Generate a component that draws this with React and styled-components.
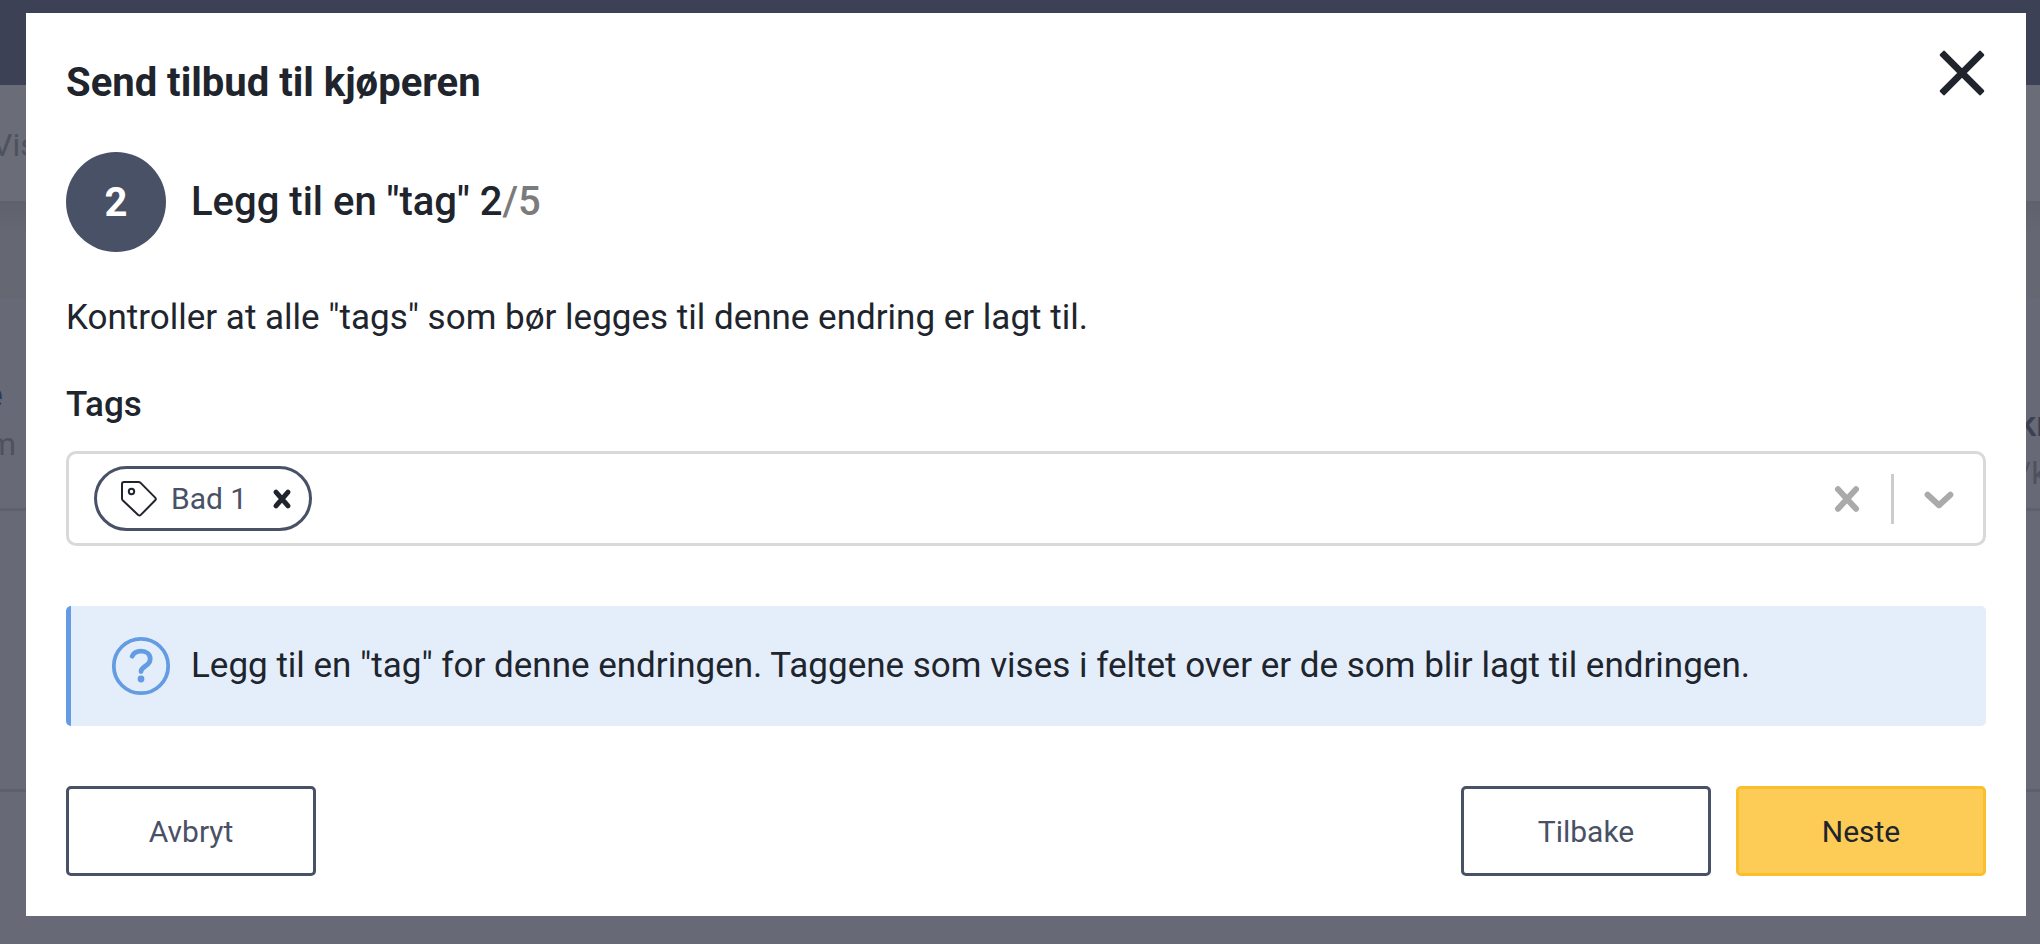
import React, { useState } from "react";
import styled, { createGlobalStyle } from "styled-components";

const GlobalStyle = createGlobalStyle`
  * {
    box-sizing: border-box;
  }

  body {
    margin: 0;
    font-family: Roboto, "Liberation Sans", sans-serif;
    color: #20242c;
    background-color: #676a76;
  }
`;

const Page = styled.div`
  display: grid;
  min-height: 100vh;
  overflow: hidden;

  > * {
    grid-area: 1 / 1;
    min-width: 0;
  }
`;

const Backdrop = styled.div`
  display: flex;
  flex-direction: column;
  overflow: hidden;
  background-color: #676a76;
`;

const TopBar = styled.div`
  height: 85px;
  background-color: #3d4155;
`;

const FilterBar = styled.div`
  display: flex;
  align-items: center;
  height: 116px;
  margin-left: -8px;
  padding-top: 4px;
  font-size: 32px;
  color: #4e525f;
  background-color: #6a6c78;
`;

const BarShadow = styled.div`
  height: 98px;
  background: linear-gradient(#5f626d, #656873 35%, #656873);
`;

const ListRow = styled.div`
  display: flex;
  justify-content: space-between;
  height: ${(props) => props.$height}px;
  margin: 0 -14px 0 -16px;
  border-bottom: 3px solid #5e616d;
`;

const RowCell = styled.div`
  display: flex;
  flex-direction: column;
  justify-content: flex-end;
  width: 36px;
  padding-bottom: ${(props) => props.$bottom}px;
  line-height: 48px;
  white-space: nowrap;

  strong {
    font-size: 35px;
    font-weight: 500;
    color: ${(props) => props.$color};
  }

  span {
    font-size: 32px;
    color: #4e525f;
  }
`;

const LeftCell = styled(RowCell)`
  span {
    padding-left: 4px;
  }
`;

const Modal = styled.div`
  align-self: start;
  margin: 13px 14px 28px 26px;
  padding: 40px;
  background-color: #ffffff;
`;

const ModalHeader = styled.header`
  display: flex;
  align-items: flex-start;
  justify-content: space-between;
  margin-bottom: 39px;
`;

const ModalTitle = styled.h1`
  margin: 0;
  font-size: 40px;
  font-weight: 700;
  line-height: 60px;
`;

const IconButton = styled.button`
  display: flex;
  align-items: center;
  justify-content: center;
  padding: 0;
  border: none;
  background: none;
  color: ${(props) => props.$color || "#20242c"};
  cursor: pointer;
`;

const CloseButton = styled(IconButton)`
  margin-top: -4px;
`;

const StepHeader = styled.div`
  display: flex;
  align-items: center;
  gap: 25px;
  margin-bottom: 40px;
`;

const StepNumber = styled.div`
  display: flex;
  align-items: center;
  justify-content: center;
  width: 100px;
  height: 100px;
  border-radius: 50%;
  font-size: 40px;
  font-weight: 700;
  color: #ffffff;
  background-color: #495166;
`;

const StepTitle = styled.h2`
  margin: 0;
  font-size: 40px;
  font-weight: 500;
  line-height: 60px;

  span {
    color: #7b7b7b;
  }
`;

const Description = styled.p`
  margin: 0 0 35px;
  font-size: 35px;
  line-height: 52px;
`;

const FieldLabel = styled.label`
  display: block;
  margin-bottom: 20px;
  font-size: 35px;
  font-weight: 500;
  line-height: 52px;
`;

const SelectBox = styled.div`
  display: flex;
  align-items: center;
  height: 95px;
  padding: 0 29px 0 25px;
  border: 3px solid #d9d9d9;
  border-radius: 10px;
`;

const Tag = styled.div`
  display: flex;
  align-items: center;
  height: 65px;
  padding: 0 16px 0 24px;
  border: 3px solid #495166;
  border-radius: 33px;
  font-size: 30px;
  color: #495166;

  span {
    margin: 0 24px 0 14px;
  }
`;

const TagInput = styled.input`
  flex: 1;
  min-width: 0;
  height: 60px;
  padding: 0 12px;
  border: none;
  outline: none;
  font: inherit;
  font-size: 30px;
  background: none;
`;

const Divider = styled.div`
  width: 3px;
  height: 50px;
  margin: 0 30px;
  background-color: #cccccc;
`;

const InfoBox = styled.div`
  display: flex;
  align-items: center;
  gap: 20px;
  min-height: 120px;
  margin: 60px 0;
  padding: 0 40px;
  border-left: 5px solid #639ce2;
  border-radius: 5px;
  font-size: 35px;
  line-height: 52px;
  background-color: #e4eefb;
`;

const ModalFooter = styled.footer`
  display: flex;
  gap: 25px;
`;

const Button = styled.button`
  width: 250px;
  height: 90px;
  padding: 0;
  border: 3px solid ${(props) => (props.$primary ? "#fbbe2c" : "#495166")};
  border-radius: 5px;
  font-family: inherit;
  font-size: 30px;
  color: ${(props) => (props.$primary ? "#20242c" : "#495166")};
  background-color: ${(props) => (props.$primary ? "#fdcc57" : "#ffffff")};
  cursor: pointer;
`;

const CancelButton = styled(Button)`
  margin-right: auto;
`;

const CrossIcon = ({ size, reach, stroke }) => {
  const end = size - reach;
  return (
    <svg width={size} height={size} viewBox={`0 0 ${size} ${size}`} fill="none">
      <path
        d={`M${reach} ${reach - 0.8}L${end} ${end + 0.8}M${end} ${reach - 0.8}L${reach} ${end + 0.8}`}
        stroke="currentColor"
        strokeWidth={stroke}
        strokeLinecap="round"
      />
    </svg>
  );
};

const CloseIcon = () => (
  <svg width="48" height="48" viewBox="0 0 48 48" fill="none">
    <path
      d="M6 3.2L24 21.2L42 3.2L44.8 6L26.8 24L44.8 42L42 44.8L24 26.8L6 44.8L3.2 42L21.2 24L3.2 6Z"
      fill="currentColor"
      stroke="currentColor"
      strokeWidth="3"
      strokeLinejoin="round"
    />
  </svg>
);

const TagIcon = () => (
  <svg width="36" height="36" viewBox="0 0 36 36" fill="none" stroke="#20242c" strokeWidth="2">
    <path
      d="M3 1H17.5Q18.7 1 19.6 1.9L34.2 16.6Q35.4 18 34.2 19.3L19.8 33.9Q18.5 35.2 17.2 33.9L1.9 19.6Q1 18.7 1 17.5V3Q1 1 3 1Z"
      strokeLinejoin="round"
    />
    <circle cx="10.5" cy="10.5" r="2.7" />
  </svg>
);

const ChevronIcon = () => (
  <svg width="30" height="24" viewBox="0 0 30 24" fill="none">
    <path
      d="M3.6 7.8L15 18.2L26.4 7.8"
      stroke="currentColor"
      strokeWidth="6"
      strokeLinecap="round"
      strokeLinejoin="round"
    />
  </svg>
);

const QuestionIcon = () => (
  <svg width="60" height="60" viewBox="0 0 60 60" fill="none" stroke="#639ce2">
    <circle cx="30" cy="30" r="27.2" strokeWidth="3.8" />
    <path
      d="M21.2 20.2C22.8 16.8 26 15.2 30 15.2C35.6 15.2 39.2 18.4 39.2 22.8C39.2 27 36.6 28.8 34 30.4C31.4 32 30 33 30 35.6"
      strokeWidth="4.8"
      strokeLinecap="round"
    />
    <circle cx="30" cy="43" r="3.4" fill="#639ce2" stroke="none" />
  </svg>
);

const App = () => {
  const [tags, setTags] = useState(["Bad 1"]);
  const [search, setSearch] = useState("");

  const removeTag = (tag) => setTags(tags.filter((item) => item !== tag));

  return (
    <Page>
      <GlobalStyle />
      <Backdrop aria-hidden="true">
        <TopBar />
        <FilterBar>Vis</FilterBar>
        <BarShadow />
        <ListRow $height={212}>
          <LeftCell $bottom={40} $color="#2d3b52">
            <strong>e</strong>
            <span>m</span>
          </LeftCell>
          <RowCell $bottom={11} $color="#3d4050">
            <strong>kr</strong>
            <span>/k</span>
          </RowCell>
        </ListRow>
        <ListRow $height={281} />
      </Backdrop>

      <Modal role="dialog" aria-labelledby="modal-title">
        <ModalHeader>
          <ModalTitle id="modal-title">Send tilbud til kjøperen</ModalTitle>
          <CloseButton type="button" aria-label="Lukk">
            <CloseIcon />
          </CloseButton>
        </ModalHeader>

        <StepHeader>
          <StepNumber>2</StepNumber>
          <StepTitle>
            Legg til en "tag" 2<span>/5</span>
          </StepTitle>
        </StepHeader>

        <Description>
          Kontroller at alle "tags" som bør legges til denne endring er lagt til.
        </Description>

        <FieldLabel htmlFor="tags">Tags</FieldLabel>
        <SelectBox>
          {tags.map((tag) => (
            <Tag key={tag}>
              <TagIcon />
              <span>{tag}</span>
              <IconButton type="button" aria-label={`Fjern ${tag}`} onClick={() => removeTag(tag)}>
                <CrossIcon size={22} reach={5} stroke={5} />
              </IconButton>
            </Tag>
          ))}
          <TagInput id="tags" value={search} onChange={(e) => setSearch(e.target.value)} />
          <IconButton type="button" $color="#aaaaaa" aria-label="Tøm" onClick={() => setTags([])}>
            <CrossIcon size={28} reach={5} stroke={6} />
          </IconButton>
          <Divider />
          <IconButton type="button" $color="#aaaaaa" aria-label="Vis tags">
            <ChevronIcon />
          </IconButton>
        </SelectBox>

        <InfoBox>
          <QuestionIcon />
          Legg til en "tag" for denne endringen. Taggene som vises i feltet over er de som blir lagt til endringen.
        </InfoBox>

        <ModalFooter>
          <CancelButton type="button">Avbryt</CancelButton>
          <Button type="button">Tilbake</Button>
          <Button type="button" $primary>
            Neste
          </Button>
        </ModalFooter>
      </Modal>
    </Page>
  );
};

export default App;
